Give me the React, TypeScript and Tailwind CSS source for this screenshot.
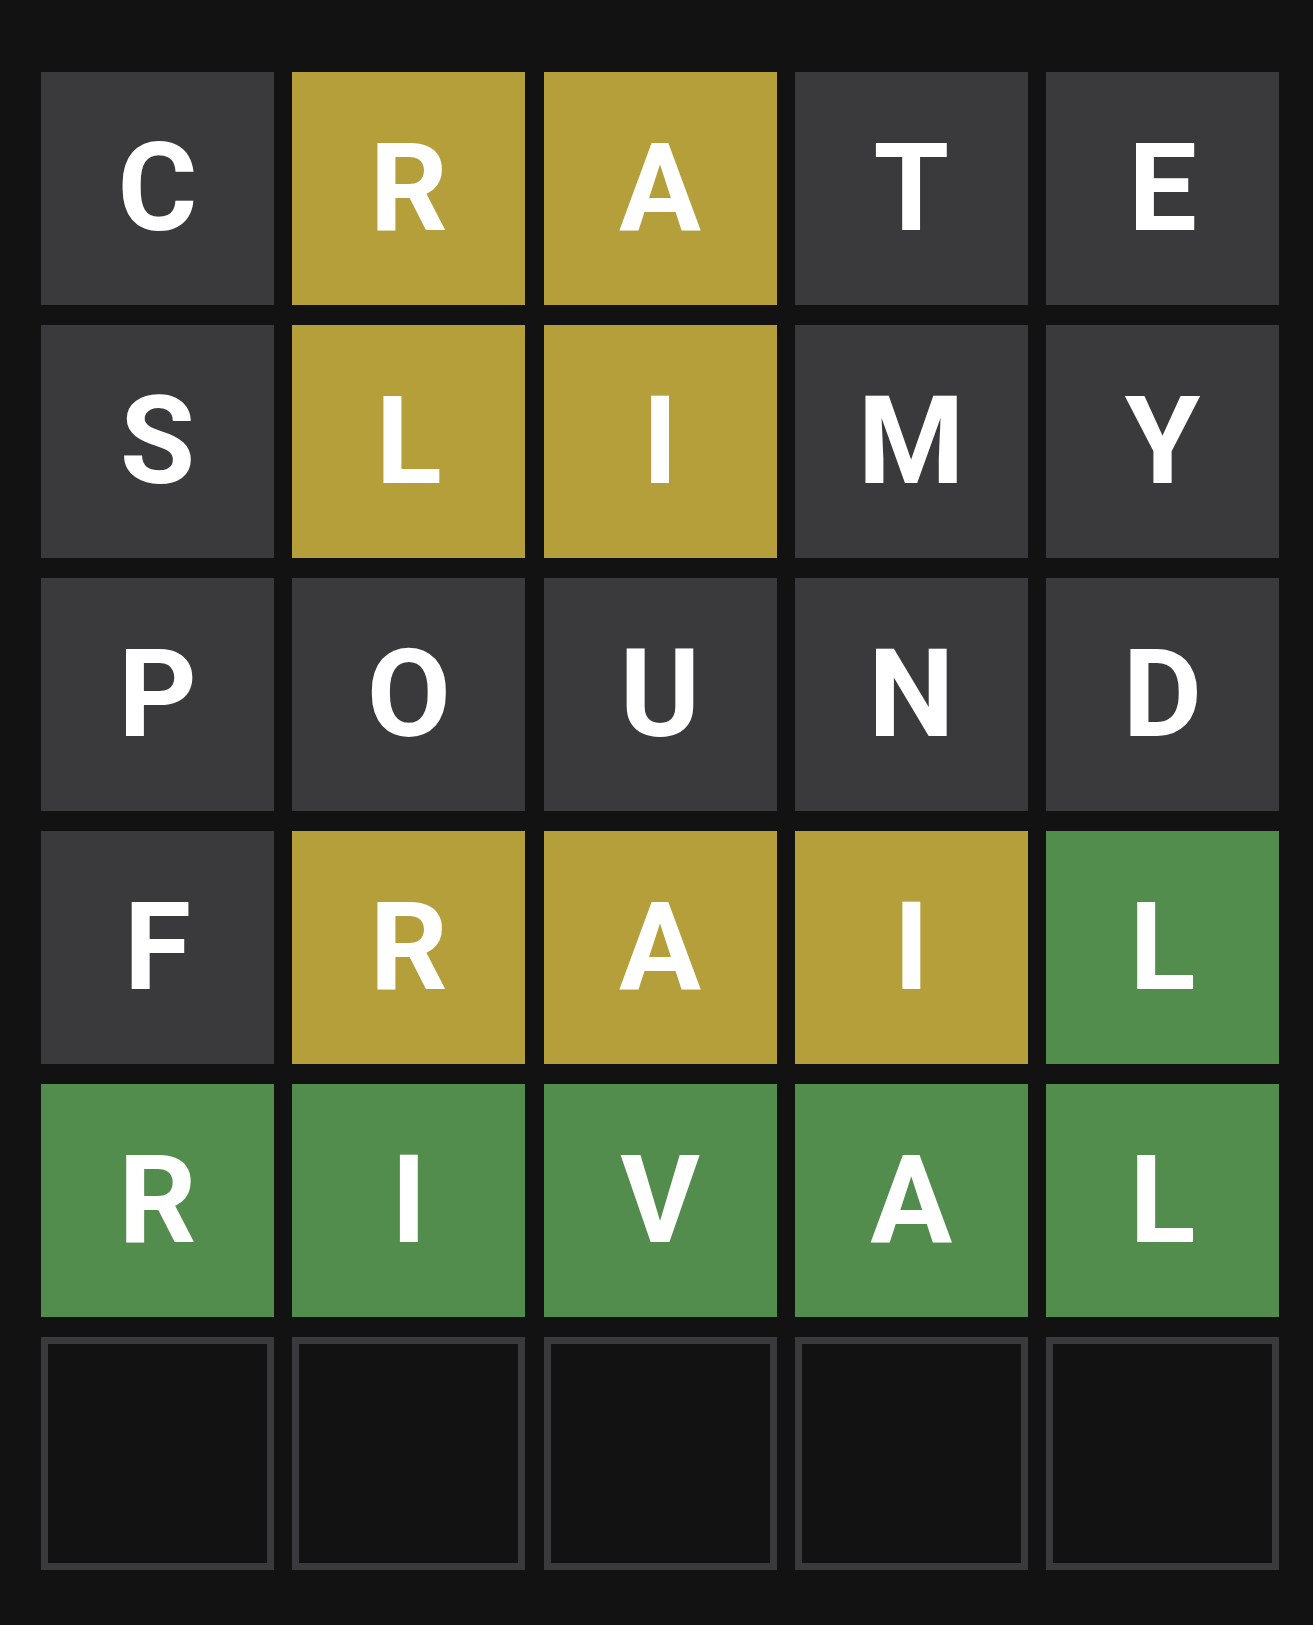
const rows: [string, string][] = [
  ["CRATE", "xyyxx"],
  ["SLIMY", "xyyxx"],
  ["POUND", "xxxxx"],
  ["FRAIL", "xyyyg"],
  ["RIVAL", "ggggg"],
  ["     ", "eeeee"],
];

const tileClass: Record<string, string> = {
  x: "bg-[#3a3a3c]",
  y: "bg-[#b59f3b]",
  g: "bg-[#538d4e]",
  e: "border-[7px] border-[#3a3a3c] bg-[#121213]",
};

export default function App() {
  return (
    <div className="min-h-[1625px] w-[1313px] bg-[#121213] pl-[41px] pt-[72px]">
      <div className="grid w-[1238px] grid-cols-5 gap-x-[18.25px] gap-y-[20px]">
        {rows.map(([word, state], r) =>
          word.split("").map((ch, i) => (
            <div
              key={`${r}-${i}`}
              className={`flex h-[233px] items-center justify-center text-[122px] font-bold leading-none text-white ${tileClass[state[i]]}`}
              style={{ fontFamily: "Roboto, 'Liberation Sans', sans-serif" }}
            >
              {ch.trim()}
            </div>
          ))
        )}
      </div>
    </div>
  );
}
